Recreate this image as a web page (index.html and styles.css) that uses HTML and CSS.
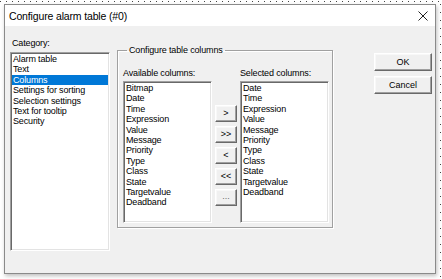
FILE: index.html
```html
<!DOCTYPE html>
<html lang="en">
<head>
  <meta charset="UTF-8">
  <title>Configure alarm table (#0)</title>
  <link rel="stylesheet" href="styles.css">
</head>
<body>
  <div class="dialog">
    <div class="titlebar">
      <span class="title">Configure alarm table (#0)</span>
      <svg class="close" width="10" height="10" viewBox="0 0 10 10">
        <path d="M0.5 0.5 L9.5 9.5 M9.5 0.5 L0.5 9.5" stroke="#222" stroke-width="1" fill="none"/>
      </svg>
    </div>

    <div class="content">
      <div class="category">
        <div class="label">Category:</div>
        <ul class="listbox category-list">
          <li>Alarm table</li>
          <li>Text</li>
          <li class="selected">Columns</li>
          <li>Settings for sorting</li>
          <li>Selection settings</li>
          <li>Text for tooltip</li>
          <li>Security</li>
        </ul>
      </div>

      <fieldset class="group">
        <legend>Configure table columns</legend>
        <div class="columns">
          <div class="col">
            <div class="label">Available columns:</div>
            <ul class="listbox column-list">
              <li>Bitmap</li>
              <li>Date</li>
              <li>Time</li>
              <li>Expression</li>
              <li>Value</li>
              <li>Message</li>
              <li>Priority</li>
              <li>Type</li>
              <li>Class</li>
              <li>State</li>
              <li>Targetvalue</li>
              <li>Deadband</li>
            </ul>
          </div>

          <div class="movers">
            <button class="btn small">&gt;</button>
            <button class="btn small">&gt;&gt;</button>
            <button class="btn small">&lt;</button>
            <button class="btn small">&lt;&lt;</button>
            <button class="btn small dots">...</button>
          </div>

          <div class="col">
            <div class="label">Selected columns:</div>
            <ul class="listbox column-list">
              <li>Date</li>
              <li>Time</li>
              <li>Expression</li>
              <li>Value</li>
              <li>Message</li>
              <li>Priority</li>
              <li>Type</li>
              <li>Class</li>
              <li>State</li>
              <li>Targetvalue</li>
              <li>Deadband</li>
            </ul>
          </div>
        </div>
      </fieldset>

      <div class="actions">
        <button class="btn">OK</button>
        <button class="btn">Cancel</button>
      </div>
    </div>
  </div>
</body>
</html>
```

FILE: styles.css
```css
* {
  box-sizing: border-box;
  margin: 0;
  padding: 0;
}

body {
  width: 442px;
  height: 279px;
  background-color: #fff;
  background-image:
    repeating-linear-gradient(to right, #444 0 1px, transparent 1px 6px),
    repeating-linear-gradient(to bottom, #444 0 1px, transparent 1px 8px);
  background-size: 100% 1px, 1px 100%;
  background-position: 0 1px, 440px 4px;
  background-repeat: no-repeat;
  font-family: "Liberation Sans", Arial, sans-serif;
  font-size: 9px;
  letter-spacing: -0.15px;
  color: #000;
  padding: 4px 0 0 4px;
}

.dialog {
  width: 432px;
  height: 270px;
  border: 1px solid #8a8a8a;
  background-color: #f0f0f0;
  box-shadow: 1px 2px 4px rgba(0, 0, 0, 0.25);
  display: flex;
  flex-direction: column;
}

.titlebar {
  height: 21px;
  background-color: #fff;
  display: flex;
  align-items: center;
  justify-content: space-between;
  padding: 0 7px 0 4px;
}

.title {
  font-size: 10.5px;
  letter-spacing: -0.15px;
  padding-top: 1px;
}

.close {
  display: block;
  margin-top: 1px;
}

.content {
  flex: 1;
  display: flex;
  align-items: flex-start;
  padding-left: 5px;
}

.label {
  line-height: 12px;
  height: 12px;
  white-space: nowrap;
}

.category {
  padding-top: 11px;
  width: 100px;
}

.category .label {
  margin-bottom: 3px;
  padding-left: 2px;
}

.listbox {
  list-style: none;
  background-color: #fff;
  border: 1px solid;
  border-color: #a0a0a0 #fff #fff #a0a0a0;
  box-shadow: inset 1px 1px 0 #696969, inset -1px -1px 0 #e3e3e3;
  padding: 1px;
  line-height: 10.4px;
  white-space: nowrap;
  overflow: hidden;
}

.listbox li {
  padding-left: 1px;
  height: 10.4px;
}

.listbox li.selected {
  background-color: #0078d7;
  color: #fff;
}

.category-list {
  height: 199px;
}

.group {
  margin: 18px 0 0 7px;
  width: 216px;
  height: 184px;
  border: 1px solid #a0a0a0;
  box-shadow: inset 1px 1px 0 #fff, 1px 1px 0 #fff;
  padding: 11px 3px 4px 5px;
  min-width: 0;
}

.group legend {
  line-height: 12px;
  padding: 0 2px;
  margin-left: 4px;
  white-space: nowrap;
}

.columns {
  display: flex;
  align-items: flex-start;
  gap: 3px;
}

.col {
  width: 89px;
}

.col .label {
  margin-bottom: 2px;
}

.column-list {
  height: 142px;
}

.movers {
  width: 22px;
  margin-top: 38px;
  display: flex;
  flex-direction: column;
  gap: 4px;
}

.btn {
  font-family: inherit;
  font-size: 9px;
  color: #000;
  background-color: #f0f0f0;
  border: 1px solid;
  border-color: #fff #696969 #696969 #fff;
  box-shadow: inset -1px -1px 0 #a0a0a0, inset 1px 1px 0 #f8f8f8;
  display: flex;
  align-items: center;
  justify-content: center;
  line-height: 1;
}

.btn.small {
  height: 17px;
  width: 22px;
}

.btn.dots {
  color: #6d6d6d;
  align-items: flex-end;
  padding-bottom: 4px;
}

.actions {
  margin: 27px 0 0 41px;
  width: 58px;
  display: flex;
  flex-direction: column;
  gap: 5px;
}

.actions .btn {
  height: 18px;
  width: 58px;
}
```
